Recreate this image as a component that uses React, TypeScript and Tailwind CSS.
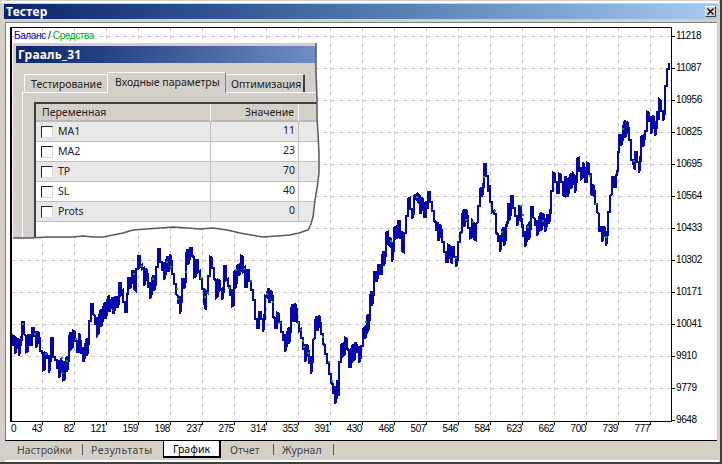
const XLABELS = [82, 121, 159, 198, 237, 275, 314, 353, 391, 430, 468, 507, 546, 584, 623, 662, 700, 739, 777];
const YLABELS = [11218, 11087, 10956, 10825, 10695, 10564, 10433, 10302, 10171, 10041, 9910, 9779, 9648];
const ROWS = [
  ["MA1", 11],
  ["MA2", 23],
  ["TP", 70],
  ["SL", 40],
  ["Prots", 0],
];

// traced from the picture: [x, top, bottom] in 3x crop units
const PART_A = [[3,285,318],[8,290,318],[14,295,345],[20,300,320],[26,303,352],[32,298,302],[36,250,300],[42,248,285],[48,290,338],[55,288,335],[60,288,318],[66,268,318],[72,268,295],[78,275,328],[85,275,305],[90,305,335],[96,335,345],[100,338,393],[105,342,390],[112,345,360],[118,348,402],[124,298,348],[130,298,355],[135,355,362],[142,362,390],[148,362,418],[154,362,395],[160,370,423],[165,375,420],[172,350,400],[178,298,350],[184,280,330],[190,275,325],[196,280,305],[202,305,340],[208,282,338],[214,315,345],[220,325,370],[226,320,350],[232,298,352],[238,245,298],[244,195,245],[248,195,225],[254,230,258],[260,235,288],[266,235,280],[272,210,265],[278,210,240],[284,190,240],[290,190,222],[296,168,220],[302,185,205],[308,175,225],[314,175,210],[320,175,208],[326,132,190],[332,132,165],[338,155,190],[344,190,220],[350,165,220],[354,118,165],[360,118,150],[366,95,122],[372,95,150],[378,90,155],[384,50,90],[390,50,85],[396,78,90],[402,88,142],[408,88,115],[414,115,148],[420,130,180],[426,120,160],[432,108,155],[438,85,132],[444,30,85],[450,30,68],[456,68,95],[462,70,122],[468,68,100],[474,50,100],[480,45,80],[486,75,105],[492,105,135],[498,135,165],[504,170,195],[510,172,225],[516,120,172],[522,120,150],[528,48,120],[534,30,78]];
const PART_B = [[30,28,50],[36,28,52],[42,55,115],[48,62,112],[54,62,100],[60,95,120],[66,120,150],[72,150,185],[78,155,212],[84,110,162],[90,55,110],[96,58,88],[102,88,120],[108,122,178],[114,122,170],[120,125,152],[126,150,182],[132,82,150],[138,82,122],[144,120,142],[150,140,172],[156,150,202],[162,100,198],[166,95,150],[172,80,125],[178,78,110],[184,52,90],[190,55,95],[196,88,145],[202,92,145],[208,92,125],[214,125,152],[220,152,182],[226,182,240],[232,240,268],[238,218,268],[244,220,240],[250,240,278],[256,170,220],[262,165,175],[268,148,192],[274,152,180],[280,180,235],[286,238,268],[292,222,268],[298,225,250],[304,250,278],[310,278,305],[316,285,338],[322,285,315],[328,265,315],[334,212,262],[340,195,245],[346,192,245],[352,215,250],[358,250,275],[364,270,298],[370,298,332],[376,315,368],[382,315,342],[388,345,375],[394,350,405],[400,302,350],[406,250,298],[412,230,275],[418,228,262],[424,260,285],[430,285,315],[436,318,345],[442,345,372],[448,372,405],[454,405,432],[460,435,465],[465,440,495],[472,422,470],[478,370,470],[484,318,370],[490,315,350],[496,296,345],[502,300,330],[508,332,385],[514,335,385],[520,315,365],[526,310,360],[532,320,342],[538,322,372]];
const PART_C = [[92,560,590],[98,510,560],[104,505,540],[110,490,515],[114,465,518],[120,415,465],[126,395,440],[132,340,390],[138,338,370],[144,318,350],[150,318,345],[156,295,345],[162,275,320],[168,222,275],[174,220,255],[180,235,260],[186,258,310],[192,208,258],[198,205,238],[204,185,235],[210,185,240],[216,215,275],[222,222,278],[228,172,222],[234,120,170],[240,118,150],[246,150,180],[252,110,160],[258,108,118],[264,105,125],[270,112,165],[276,115,150],[282,140,175],[288,125,175],[294,100,150],[300,98,128],[306,128,155],[312,155,185],[318,188,215],[324,190,245],[330,195,230],[336,220,248],[342,248,280],[348,280,310],[354,258,310],[360,262,290],[366,265,315],[372,265,295],[378,295,325],[384,250,295],[390,222,250],[396,172,220],[402,150,205],[408,150,180],[414,180,208],[420,208,238],[426,185,235],[432,195,240],[438,195,243],[444,142,190],[450,90,140],[456,88,115],[462,15,68],[468,15,50],[474,50,100],[480,78,130],[486,130,160],[492,155,165],[498,165,222],[504,225,250],[510,228,280],[516,215,232],[522,205,260],[528,205,235],[534,135,185]];
const PART_D = [[28,465,515],[34,440,492],[40,440,478],[46,478,500],[52,500,530],[58,470,507],[64,470,505],[70,540,565],[76,545,595],[82,535,570],[88,525,572],[94,475,525],[100,475,505],[106,510,530],[112,512,562],[118,510,540],[124,490,545],[130,492,518],[136,518,548],[142,497,525],[148,497,525],[152,425,478],[158,372,425],[164,375,400],[170,400,432],[176,375,432],[182,378,400],[188,400,438],[194,380,440],[200,392,445],[206,392,425],[212,372,420],[218,375,400],[224,385,432],[230,330,385],[236,328,370],[242,355,390],[248,340,385],[254,365,398],[260,342,398],[266,345,375],[272,375,435],[278,405,438],[284,435,465],[290,465,490],[296,495,550],[305,530,580],[311,530,555],[317,555,590],[323,488,540],[329,440,488],[335,385,435],[341,383,415],[347,385,415],[353,310,360],[358,258,310],[364,258,290],[370,238,265],[376,212,268],[382,215,245],[388,245,272],[394,272,332],[400,332,338],[406,310,362],[412,310,340],[418,340,372],[424,265,315],[430,262,295],[436,245,262],[442,190,245],[448,192,220],[454,200,255],[460,198,228],[466,228,260],[472,185,225],[478,150,212],[484,155,185],[490,185,215],[496,112,185],[502,60,110],[508,42,60]];

// x, centre y of the little green bits where equity shows past the balance
const GREEN = [[62,359],[62,374],[67,362],[23,325],[76,340],[46,355],[35,335],[142,267],[134,275],[153,280],[167,263],[171,268],[177,290],[178,300],[186,273],[201,279],[205,298],[208,294],[229,289],[236,271],[244,270],[251,282],[267,295],[273,303],[280,324],[298,324],[301,331],[303,342],[304,348],[308,354],[323,338],[329,363],[332,382],[366,323],[391,242],[417,198],[456,259],[466,221],[473,223],[484,178],[495,212],[502,233],[521,207],[523,216],[528,228],[543,222],[590,177],[596,205],[606,238],[623,130],[634,162]];

function buildLine() {
  const parts: [number[][], number, number][] = [
    [PART_A, 10, 240],
    [PART_B, 180, 240],
    [PART_C, 330, 160],
    [PART_D, 500, 50],
  ];
  let d = "";
  let prev: number | null = null;
  for (const [cols, ox, oy] of parts) {
    for (const [x, a, b] of cols) {
      const sx = Math.round(ox + x / 3);
      const top = Math.round(oy + a / 3);
      const bot = Math.round(oy + b / 3);
      const downward = prev === null || Math.abs(prev - top) <= Math.abs(prev - bot);
      const first = downward ? top : bot;
      const last = downward ? bot : top;
      d += `${d ? "L" : "M"}${sx} ${first}L${sx} ${last}`;
      prev = last;
    }
  }
  return d;
}

const TORN = "303,0 303,28 304,57 304,75 305,90 306,110 306,130 304,145 302,157 301,166 300,174 298,181 295,187 286,190 277,192 264,193 250,194 238,192 227,190 214,187 200,185 187,186 174,185 160,184 147,185 133,186 120,187 110,190 100,192 90,194 80,194 70,193 60,194 47,194 34,194 17,195 0,195";

function Chart() {
  const gridX = Array.from({ length: 20 }, (_, i) => 42 + i * 32);
  const gridY = Array.from({ length: 12 }, (_, i) => 37 + i * 32);
  return (
    <svg className="block overflow-visible shrink-0" width="662" height="395" viewBox="10 28 662 395" shapeRendering="crispEdges">
      {gridX.map((x) => (
        <g key={x}>
          <line x1={x + 0.5} x2={x + 0.5} y1={28} y2={422} stroke="#c8c8c8" strokeDasharray="4 4" />
          <line x1={x + 0.5} x2={x + 0.5} y1={422} y2={426} stroke="#000" />
        </g>
      ))}
      {gridY.map((y) => (
        <g key={y}>
          <line x1={11} x2={671} y1={y + 0.5} y2={y + 0.5} stroke="#c8c8c8" strokeDasharray="4 4" />
          <line x1={671} x2={675} y1={y + 0.5} y2={y + 0.5} stroke="#000" />
        </g>
      ))}
      <line x1={671} x2={675} y1={421.5} y2={421.5} stroke="#000" />
      <path d={buildLine()} fill="none" stroke="#0606ae" strokeWidth="2.6" />
      {GREEN.map(([x, y]) => (
        <line key={`${x}-${y}`} x1={x} x2={x} y1={y - 1} y2={y + 1} stroke="#00a800" strokeWidth="1.5" />
      ))}
      <path d="M10.5 423V28.5H671.5V423M10 422.5H672" fill="none" stroke="#000" />
      <path d="M11.5 29V422" stroke="#000" />
    </svg>
  );
}

function ParamsDialog() {
  return (
    <div className="absolute left-[13px] top-[43px] w-[308px] h-[197px]">
      <div className="w-full h-full bg-[#d4d0c8] pt-[3px] flex flex-col [clip-path:polygon(0_0,303px_0,303px_28px,304px_57px,304px_75px,305px_90px,306px_110px,306px_130px,304px_145px,302px_157px,301px_166px,300px_174px,298px_181px,295px_187px,286px_190px,277px_192px,264px_193px,250px_194px,238px_192px,227px_190px,214px_187px,200px_185px,187px_186px,174px_185px,160px_184px,147px_185px,133px_186px,120px_187px,110px_190px,100px_192px,90px_194px,80px_194px,70px_193px,60px_194px,47px_194px,34px_194px,17px_195px,0_195px)]">
        <div className="ml-[3px] w-[300px] h-[17px] shrink-0 bg-gradient-to-r from-[#0a246a] to-[#6f8fc4] text-white font-bold text-[12px] leading-[17px] pl-[2px] tracking-[0.2px]">
          Грааль_31
        </div>
        <div className="ml-[11px] mt-[9px] h-[20px] shrink-0 flex items-end whitespace-nowrap">
          <div className="w-[83px] h-[18px] bg-[#d4d0c8] border-t border-l border-white rounded-t-[2px] pl-[6px] leading-[19px]">Тестирование</div>
          <div className="w-[119px] h-[21px] -mb-px bg-[#d4d0c8] border-t border-l border-r border-white border-r-[#808080] rounded-t-[2px] pl-[7px] leading-[18px] relative z-10">Входные параметры</div>
          <div className="w-[79px] h-[18px] bg-[#d4d0c8] border-t border-r-2 border-white border-r-[#404040] rounded-t-[2px] pl-[5px] leading-[19px]">Оптимизация</div>
        </div>
        <div className="ml-[9px] flex-1 border-l border-t border-white pl-[11px] pt-[9px] flex">
          <div className="flex-1 border-l-2 border-t-2 border-[#404040] bg-white">
            <div className="grid grid-cols-[175px_88px_1fr] h-[18px] bg-[#d4d0c8] border-b-2 border-[#b8b8b8] leading-[17px]">
              <div className="pl-[6px] border-r border-white">Переменная</div>
              <div className="text-right pr-[4px] border-r border-white">Значение</div>
              <div />
            </div>
            {ROWS.map(([name, value], i) => (
              <div
                key={name}
                className={`grid grid-cols-[175px_88px_1fr] h-[20px] border-b border-[#c0c0c0] leading-[17px] ${i % 2 === 0 ? "bg-[#e8e8e8]" : "bg-white"}`}
              >
                <div className="border-r border-[#c0c0c0] pl-[5px] flex items-center gap-[5px]">
                  <span className="w-[12px] h-[12px] bg-white border-l border-t border-l-[#202020] border-t-[#202020] border-r border-b border-r-[#dcdcdc] border-b-[#dcdcdc]" />
                  <span>{name}</span>
                </div>
                <div className="border-r border-[#c0c0c0] text-right pr-[3px]">{value}</div>
                <div />
              </div>
            ))}
          </div>
        </div>
      </div>
      <svg className="absolute inset-0 overflow-visible" width="308" height="197" fill="none">
        <polyline points={TORN} stroke="#585858" strokeWidth="1.5" />
      </svg>
    </div>
  );
}

export default function App() {
  return (
    <div className="relative w-[722px] h-[464px] bg-[#d4d0c8] border-r-2 border-b-2 border-[#404040] font-['Noto_Sans',sans-serif] text-[10.5px] text-[#222] overflow-hidden">
      <div className="h-full flex flex-col pt-[1px] pl-[1px]">
        <div className="h-[2px] mb-[1px] shrink-0 bg-white mr-[1px]" />
        <div className="ml-[3px] mr-[3px] h-[15px] shrink-0 bg-gradient-to-r from-[#0a246a] to-[#a6caf0] flex items-center justify-between">
          <span className="text-white font-bold text-[12px] leading-[14px] pl-[2px] tracking-[0.2px]">Тестер</span>
          <span className="w-[11px] h-[11px] mr-[1px] bg-[#d4d0c8] border-t border-l border-white border-r border-b border-r-[#404040] border-b-[#404040] flex items-center justify-center">
            <svg width="7" height="7" viewBox="0 0 7 7" stroke="#000" strokeWidth="1.2">
              <path d="M0.5 0.5L6.5 6.5M6.5 0.5L0.5 6.5" />
            </svg>
          </span>
        </div>
        <div className="h-[3px] shrink-0" />
        <div className="ml-[4px] mr-[3px] flex-1 flex flex-col bg-white border-t border-l border-[#808080]">
          <div className="pl-[4px] pt-[4px] flex h-[399px] shrink-0">
            <Chart />
            <div className="flex flex-col pl-[4px] pt-[2px] font-['Liberation_Sans',sans-serif] text-[10px] leading-[14px] tracking-[-0.4px] gap-[18px] text-black">
              {YLABELS.map((v) => (
                <span key={v}>{v}</span>
              ))}
            </div>
          </div>
          <div className="pl-[5px] pt-[1px] flex font-['Liberation_Sans',sans-serif] text-[10px] leading-[12px] tracking-[-0.4px] text-black">
            <div className="w-[32px] flex justify-between pr-[1px]">
              <span>0</span>
              <span>43</span>
            </div>
            {XLABELS.map((v) => (
              <span key={v} className="w-[32px] text-right pr-[1px]">
                {v}
              </span>
            ))}
          </div>
          <div className="flex-1" />
        </div>
        <div className="ml-[4px] mr-[3px] h-[20px] shrink-0 bg-[#d4d0c8] border-t border-black flex pl-[12px] text-[#444] whitespace-nowrap">
          <span className="leading-[18px] w-[54px]">Настройки</span>
          <span className="w-px h-[11px] mt-[3px] bg-[#555] ml-[11px] mr-[8px]" />
          <span className="leading-[18px] w-[62px] tracking-[0.5px]">Результаты</span>
          <div className="ml-[10px] mr-[9px] w-[58px] h-[17px] bg-white border-l border-r-2 border-b-2 border-black text-center leading-[16px] text-black">
            График
          </div>
          <span className="leading-[18px] w-[32px]">Отчет</span>
          <span className="w-px h-[11px] mt-[3px] bg-[#555] ml-[11px] mr-[8px]" />
          <span className="leading-[18px] w-[40px]">Журнал</span>
          <span className="w-px h-[11px] mt-[3px] bg-[#555] ml-[11px]" />
        </div>
        <div className="h-[2px] shrink-0 bg-white mr-[1px] ml-[4px]" />
      </div>
      <div className="absolute left-[14px] top-[30px] font-['Liberation_Sans',sans-serif] text-[10px] leading-[12px] tracking-[-0.4px]">
        <span className="text-[#0000c8]">Баланс</span> <span className="text-black">/</span> <span className="text-[#00b000]">Средства</span>
      </div>
      <ParamsDialog />
    </div>
  );
}
